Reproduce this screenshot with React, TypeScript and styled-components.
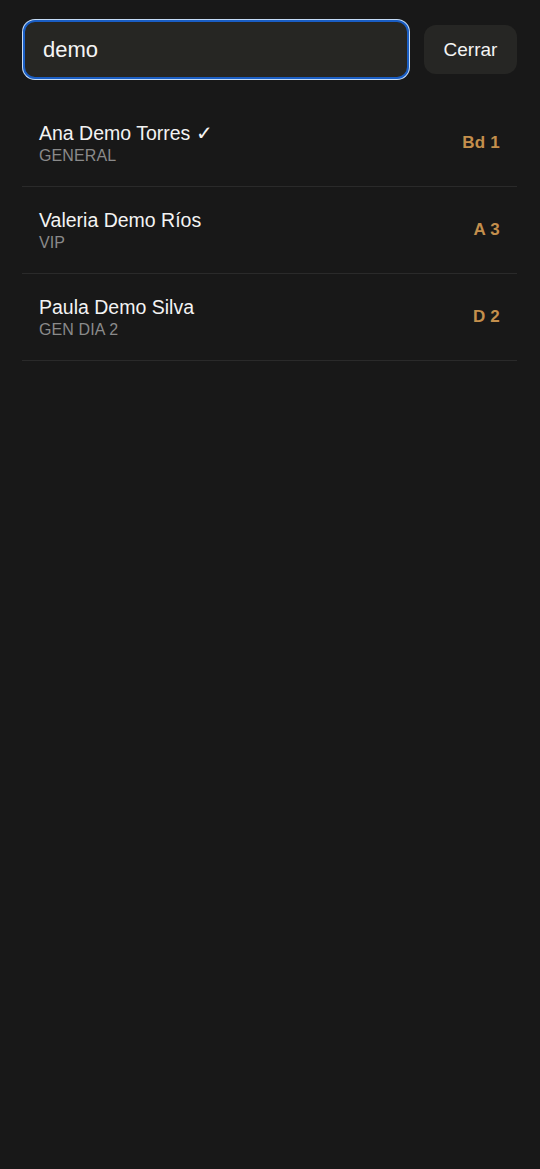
import { createGlobalStyle } from "styled-components";
import styled from "styled-components";

const GlobalStyle = createGlobalStyle`
  html, body {
    margin: 0;
    background: #181818;
  }
  body {
    font-family: "Liberation Sans", Arial, sans-serif;
    color: #f2f2f2;
  }
`;

const Page = styled.div`
  min-height: 1169px;
  box-sizing: border-box;
  padding: 0 23px 0 22px;
  background: #181818;
`;

const Header = styled.div`
  display: flex;
  align-items: center;
  gap: 15px;
  padding: 20px 0 21px 1px;
`;

const SearchInput = styled.input`
  flex: 1;
  min-width: 0;
  height: 59px;
  box-sizing: border-box;
  padding: 0 18px;
  border: 2px solid #1a5ec4;
  border-radius: 12px;
  box-shadow: 0 0 0 1px #c4dbf6;
  background: #262623;
  color: #f4f4f4;
  font-family: inherit;
  font-size: 22px;
  outline: none;
`;

const CloseButton = styled.button`
  width: 93px;
  height: 49px;
  border: none;
  border-radius: 12px;
  background: #262624;
  color: #f4f4f4;
  font-family: inherit;
  font-size: 19px;
  cursor: pointer;
`;

const List = styled.ul`
  list-style: none;
  margin: 0;
  padding: 0;
`;

const Row = styled.li`
  display: flex;
  align-items: center;
  justify-content: space-between;
  height: 87px;
  box-sizing: border-box;
  padding: 0 17px;
  border-bottom: 1px solid #2a2a2a;
`;

const Info = styled.div`
  display: flex;
  flex-direction: column;
`;

const Name = styled.span`
  font-size: 19.5px;
  line-height: 25px;
  color: #f3f3f3;
`;

const Category = styled.span`
  font-size: 16px;
  line-height: 20px;
  letter-spacing: 0.1px;
  text-transform: uppercase;
  color: #8a8a8a;
`;

const Seat = styled.span`
  font-size: 17px;
  font-weight: bold;
  letter-spacing: 0.2px;
  color: #c48f4c;
`;

const guests = [
  { name: "Ana Demo Torres", checked: true, category: "General", seat: "Bd 1" },
  { name: "Valeria Demo Ríos", checked: false, category: "VIP", seat: "A 3" },
  { name: "Paula Demo Silva", checked: false, category: "Gen Dia 2", seat: "D 2" },
];

export default function App() {
  return (
    <>
      <GlobalStyle />
      <Page>
        <Header>
          <SearchInput defaultValue="demo" spellCheck={false} />
          <CloseButton>Cerrar</CloseButton>
        </Header>
        <List>
          {guests.map((g) => (
            <Row key={g.name}>
              <Info>
                <Name>
                  {g.name}
                  {g.checked ? " ✓" : ""}
                </Name>
                <Category>{g.category}</Category>
              </Info>
              <Seat>{g.seat}</Seat>
            </Row>
          ))}
        </List>
      </Page>
    </>
  );
}
